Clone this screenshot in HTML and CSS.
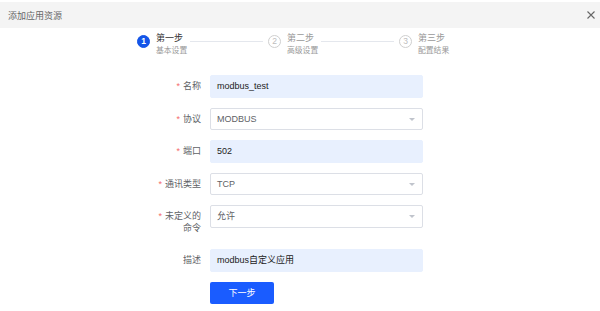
FILE: index.html
```html
<!DOCTYPE html>
<html lang="zh">
<head>
<meta charset="utf-8">
<title>添加应用资源</title>
<link rel="stylesheet" href="styles.css">
</head>
<body>
<div class="dialog">
  <div class="header">
    <span class="title">添加应用资源</span>
    <svg class="close" width="8" height="8" viewBox="0 0 8 8"><path d="M0.5 0.5 L7.5 7.5 M7.5 0.5 L0.5 7.5" stroke="#666" stroke-width="1.1" fill="none"/></svg>
  </div>

  <div class="steps">
    <div class="step">
      <div class="circle active">1</div>
      <div class="step-text">
        <div class="step-title active">第一步</div>
        <div class="step-desc">基本设置</div>
      </div>
      <div class="step-line"></div>
    </div>
    <div class="step">
      <div class="circle">2</div>
      <div class="step-text">
        <div class="step-title">第二步</div>
        <div class="step-desc">高级设置</div>
      </div>
      <div class="step-line"></div>
    </div>
    <div class="step last">
      <div class="circle">3</div>
      <div class="step-text">
        <div class="step-title">第三步</div>
        <div class="step-desc">配置结果</div>
      </div>
    </div>
  </div>

  <form class="form">
    <div class="row">
      <label class="label req">名称</label>
      <div class="input filled">modbus_test</div>
    </div>
    <div class="row">
      <label class="label req">协议</label>
      <div class="input select">MODBUS<span class="arrow"></span></div>
    </div>
    <div class="row">
      <label class="label req">端口</label>
      <div class="input filled">502</div>
    </div>
    <div class="row">
      <label class="label req">通讯类型</label>
      <div class="input select">TCP<span class="arrow"></span></div>
    </div>
    <div class="row">
      <label class="label req">未定义的命令</label>
      <div class="input select">允许<span class="arrow"></span></div>
    </div>
    <div class="row">
      <label class="label">描述</label>
      <div class="input filled">modbus自定义应用</div>
    </div>
    <div class="row">
      <div class="label"></div>
      <button type="button" class="btn">下一步</button>
    </div>
  </form>
</div>
</body>
</html>
```

FILE: styles.css
```css
* { box-sizing: border-box; }
html, body {
  margin: 0;
  padding: 0;
  background: #fff;
  font-family: "Liberation Sans", "Noto Sans CJK SC", sans-serif;
}
.dialog {
  width: 600px;
  height: 311px;
  padding-top: 2px;
}
.header {
  height: 26px;
  background: #f4f4f4;
  display: flex;
  align-items: center;
  justify-content: space-between;
  padding: 0 5px 0 8px;
}
.title {
  font-size: 9px;
  color: #666;
}
.close { display: block; }

.steps {
  display: flex;
  margin: 4px 0 0 137px;
  width: 320px;
}
.step {
  display: flex;
  width: 131px;
}
.step.last { width: auto; }
.circle {
  width: 13px;
  height: 13px;
  margin-top: 2.5px;
  border-radius: 50%;
  border: 1px solid #cfcfcf;
  color: #bdbdbd;
  font-size: 8.5px;
  line-height: 11px;
  text-align: center;
  flex: none;
}
.circle.active {
  background: #1455e8;
  border-color: #1455e8;
  color: #fff;
  font-weight: bold;
}
.step-text {
  margin-left: 6px;
  flex: none;
}
.step-title {
  font-size: 9px;
  line-height: 12px;
  color: #999;
}
.step-title.active { color: #333; }
.step-desc {
  font-size: 7.8px;
  line-height: 12px;
  margin-top: 1px;
  color: #999;
}
.step-line {
  flex: 1;
  height: 1px;
  background: #e4e7ed;
  margin: 8.5px 5px 0 3px;
}

.form {
  margin: 18px 0 0 158px;
}
.row {
  display: flex;
  align-items: flex-start;
  margin-bottom: 10px;
}
.label {
  width: 52px;
  flex: none;
  padding: 5px 9px 5px 0;
  font-size: 9px;
  line-height: 12px;
  color: #606266;
  text-align: right;
}
.label.req::before {
  content: "*";
  color: #f56c6c;
  margin-right: 3px;
}
.input {
  position: relative;
  width: 213px;
  height: 22.5px;
  border: 1px solid #dcdfe6;
  border-radius: 2px;
  padding: 0 6px;
  font-size: 9px;
  line-height: 20.5px;
  color: #606266;
}
.input.filled {
  background: #e8f0fe;
  border-color: #e8f0fe;
  color: #222;
}
.arrow {
  position: absolute;
  right: 7px;
  top: 9px;
  width: 0;
  height: 0;
  border-left: 3.5px solid transparent;
  border-right: 3.5px solid transparent;
  border-top: 3.5px solid #c0c4cc;
}
.btn {
  width: 64px;
  height: 22.5px;
  border: none;
  border-radius: 2px;
  background: #1a5cff;
  color: #fff;
  font-family: "Liberation Sans", "Noto Sans CJK SC", sans-serif;
  font-size: 9px;
  padding: 0;
}
```
